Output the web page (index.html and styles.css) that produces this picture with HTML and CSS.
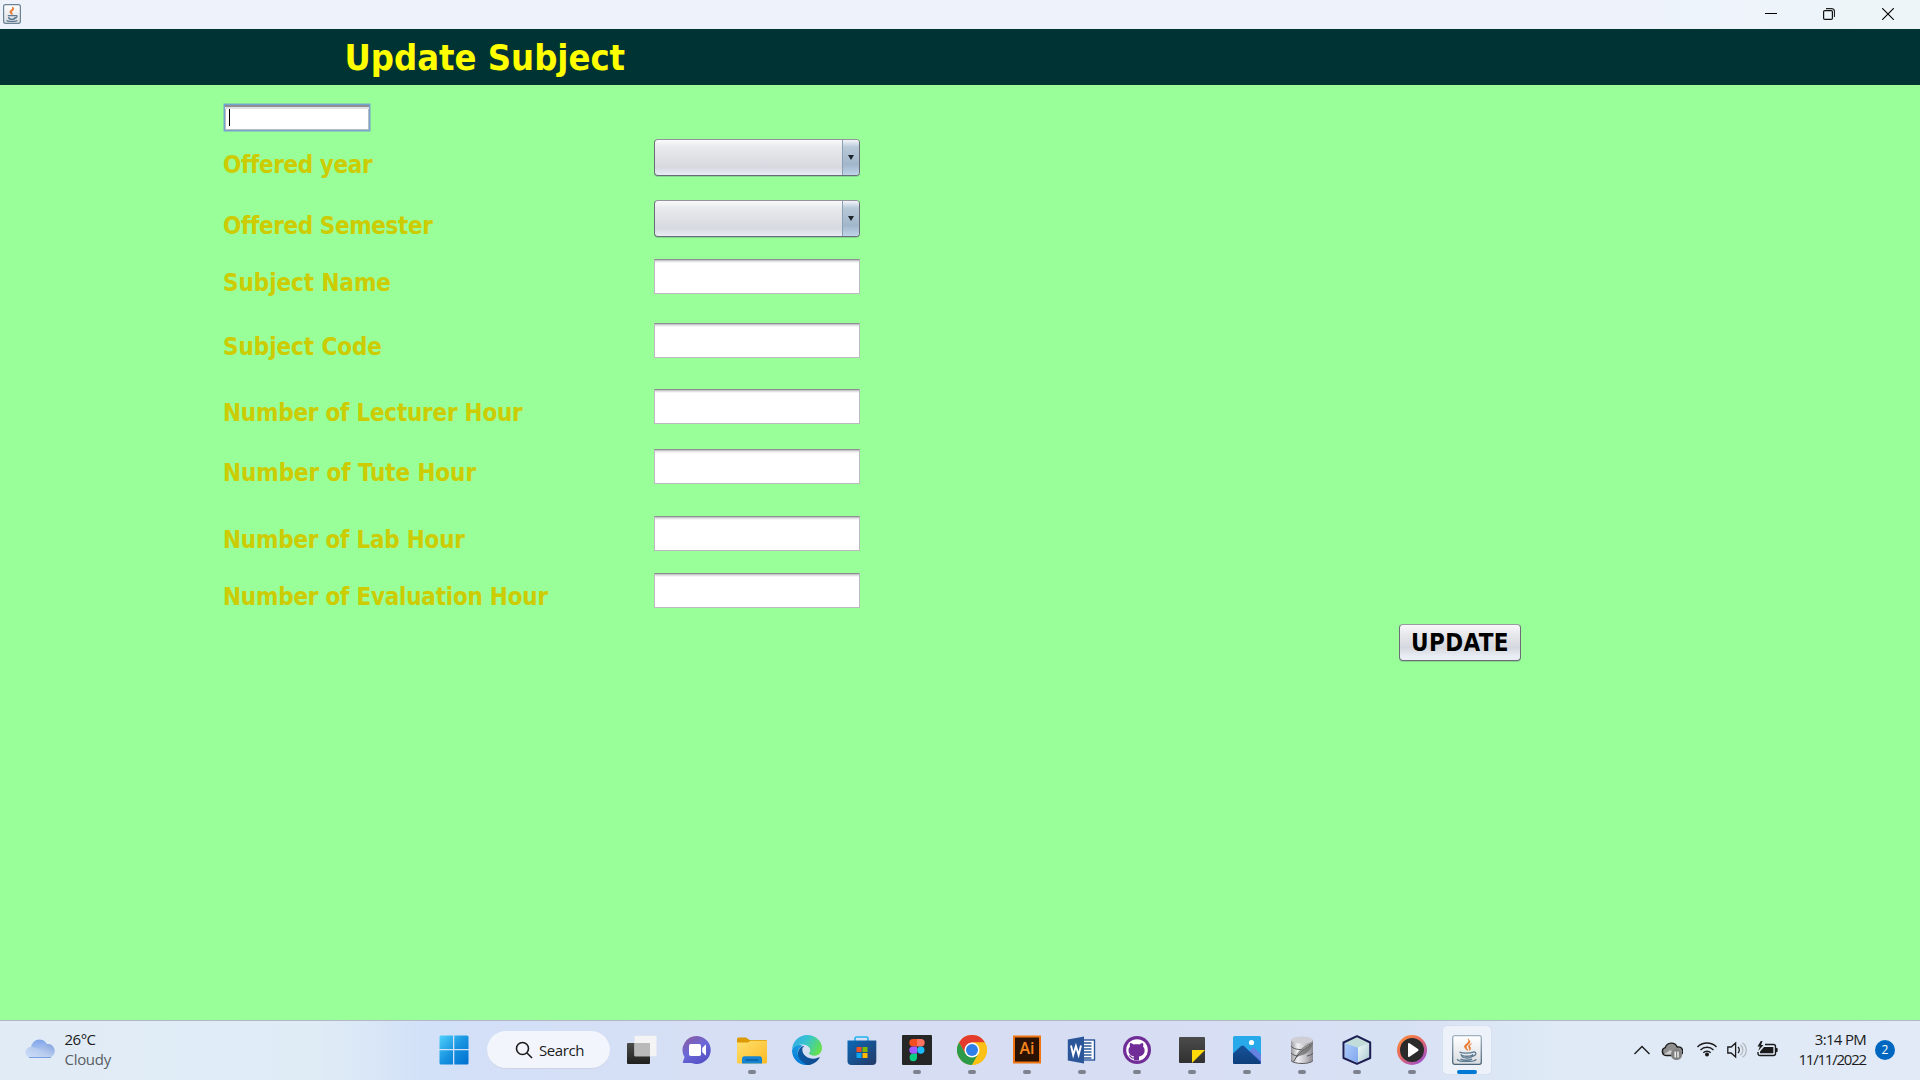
FILE: index.html
```html
<!DOCTYPE html>
<html lang="en">
<head>
<meta charset="utf-8">
<title>Update Subject</title>
<link rel="stylesheet" href="styles.css">
</head>
<body>
<svg class="defs" width="0" height="0">
  <defs>
    <linearGradient id="cup-bg" x1="0" y1="0" x2="0" y2="1"><stop offset="0" stop-color="#fff"/><stop offset="1" stop-color="#d9dce0"/></linearGradient>
    <linearGradient id="cup-rim" x1="0" y1="0" x2="0" y2="1"><stop offset="0" stop-color="#9fb0bf"/><stop offset="1" stop-color="#4b6478"/></linearGradient>
    <symbol id="java" viewBox="0 0 30 30">
      <rect x=".7" y=".7" width="28.6" height="28.6" rx="2" fill="url(#cup-bg)" stroke="url(#cup-rim)" stroke-width="1.3"/>
      <path d="M15.4 15.5c-3.6-3.2-4.200-4.400-.5-7 2.200-1.600 2-3.200 1.100-4.800 3 2.500 2.200 4.300-.1 6-2.300 1.900-1.900 3 .1 5.200zM17.200 15.600c1.300-1.700-.9-2.700-.7-4.300.2-1.400 1.600-2.200 3.200-2.600-2 1.200-2.500 2.200-1.600 3.300 1.100 1.400.7 2.600-.9 3.600z" fill="#e8762b" stroke="#e8762b" stroke-width=".5"/>
      <path d="M7.500 17.200c2.500 1.300 11 1.300 13.500 0M9 19c.6 3.500 2 4 6 4s5-.6 5.600-4M9.500 20.300c3 1 8 1 10.500 0M20.500 17.500c4-2 5.200 2.600-.7 4M5.500 24c-1.600 3.200 17.500 3.300 18.800.2M8.500 24.200c3 1.200 9 1.200 11.500 0" fill="none" stroke="#5c7a92" stroke-width="1.300"/>
    </symbol>
  </defs>
</svg>

<header class="titlebar">
  <svg class="app-icon" width="17" height="20" viewBox="0 0 30 30" preserveAspectRatio="none">
    <rect x="1" y="1" width="28" height="28" rx="3" fill="url(#cup-bg)" stroke="#6c8396" stroke-width="2"/>
    <path d="M14.500 15.500c-4-3-3.500-5 0-7 1.700-1.100 1.800-2.500 1.300-4 2.800 2.200 2.200 4-.2 5.700-2 1.500-1.500 3 .2 5z" fill="#e8762b" stroke="#e8762b" stroke-width="1.500"/>
    <path d="M8 17.500h13M9 19.500c.6 3 2 3.500 6 3.500s5-.6 5.600-3.500M20.500 17.500c4-1 4 2.600-.7 4M6 24.500c1 2 16 2.200 18 0" fill="none" stroke="#5c7a92" stroke-width="2"/>
  </svg>
  <div class="window-buttons">
    <svg width="12" height="12" viewBox="0 0 12 12"><path d="M0 5.500h12" stroke="#000"/></svg>
    <svg width="12" height="12" viewBox="0 0 12 12" fill="none"><path d="M3 .6h5.500a3 3 0 0 1 3 3V9" stroke="#222" stroke-width="1.200"/><rect x=".6" y="2.600" width="8.800" height="8.800" rx="1.200" stroke="#111" stroke-width="1.200"/></svg>
    <svg width="12" height="12" viewBox="0 0 12 12"><path d="M.2.2l11.600 11.600M11.800.2L.2 11.800" stroke="#000" stroke-width="1.100"/></svg>
  </div>
</header>

<div class="banner"><h1 class="heading">Update Subject</h1></div>

<main class="panel">
  <div class="id-field"><span class="caret"></span></div>
  <div class="form">
    <div class="row row-combo"><span class="label tight">Offered year</span><div class="combo"><i class="arrow"></i></div></div>
    <div class="row row-combo"><span class="label tight">Offered Semester</span><div class="combo"><i class="arrow"></i></div></div>
    <div class="row"><span class="label subject">Subject Name</span><div class="field"></div></div>
    <div class="row"><span class="label subject">Subject Code</span><div class="field"></div></div>
    <div class="row"><span class="label hours">Number of Lecturer Hour</span><div class="field"></div></div>
    <div class="row"><span class="label">Number of Tute Hour</span><div class="field"></div></div>
    <div class="row"><span class="label hours">Number of Lab Hour</span><div class="field"></div></div>
    <div class="row"><span class="label hours">Number of Evaluation Hour</span><div class="field"></div></div>
  </div>
  <button class="update" type="button"><span>UPDATE</span></button>
</main>

<footer class="taskbar">
  <div class="weather">
    <svg width="30" height="20" viewBox="0 0 30 20">
      <defs>
        <linearGradient id="cl1" x1="0" y1="0" x2="0" y2="1"><stop offset="0" stop-color="#7fa4e8"/><stop offset="1" stop-color="#c3d8fa"/></linearGradient>
        <linearGradient id="cl2" x1="1" y1="0" x2="0" y2="1"><stop offset="0" stop-color="#7f9fdf"/><stop offset=".5" stop-color="#b7cbee"/><stop offset="1" stop-color="#cfe0fa"/></linearGradient>
      </defs>
      <circle cx="14.500" cy="9" r="8.500" fill="url(#cl1)"/>
      <path d="M6 19a5.600 5.600 0 1 1 3-10.400c2 .2 5 2 7 1.500A7 7 0 1 1 23 19z" fill="url(#cl2)"/>
      <path d="M4 18.500h22" stroke="#7c9fe2"/>
    </svg>
    <div class="weather-text"><span class="temp">26°C</span><span class="sky">Cloudy</span></div>
  </div>

  <div class="apps">
    <div class="start">
      <svg width="30" height="30" viewBox="0 0 30 30">
        <defs><linearGradient id="win" x1="0" y1="0" x2="1" y2="1"><stop offset="0" stop-color="#4fd0fb"/><stop offset=".5" stop-color="#1793e0"/><stop offset="1" stop-color="#006fcf"/></linearGradient></defs>
        <path d="M2 .5h12V14H.5V2A1.500 1.500 0 0 1 2 .5zM15.300.5H28A1.500 1.500 0 0 1 29.500 2v12H15.300zM.5 15.300H14v14.200H2A1.500 1.500 0 0 1 .5 28zM15.300 15.300h14.200V28a1.500 1.500 0 0 1-1.500 1.500H15.300z" fill="url(#win)"/>
      </svg>
    </div>
    <div class="search">
      <svg width="18" height="18" viewBox="0 0 18 18" fill="none" stroke="#1b1b1b" stroke-width="1.600"><circle cx="7.500" cy="7.500" r="6"/><path d="M12 12l5 5"/></svg>
      <span class="search-text">Search</span>
    </div>
    <div class="slot">
      <svg width="30" height="30" viewBox="0 0 30 30">
        <defs><linearGradient id="tv" x1="0" y1="0" x2="0" y2="1"><stop offset="0" stop-color="#4b4b49"/><stop offset="1" stop-color="#20201f"/></linearGradient></defs>
        <rect x="0" y="8" width="23" height="21" rx="1" fill="url(#tv)"/><rect x="7.500" y=".8" width="22" height="20.400" rx="1" fill="#f4f4f4"/><path d="M7.500 8H23v13.200H7.500z" fill="#b9bab9"/>
      </svg>
    </div>
    <div class="slot">
      <svg width="30" height="30" viewBox="0 0 30 30">
        <defs><linearGradient id="chat" x1=".1" y1="0" x2=".7" y2="1"><stop offset="0" stop-color="#8c5b9f"/><stop offset=".5" stop-color="#6a68d8"/><stop offset="1" stop-color="#5450c4"/></linearGradient></defs>
        <path d="M15 1a14 14 0 1 1-5.500 27H1.600c-.8 0-1.100-.7-.7-1.300l1.700-4.500A14 14 0 0 1 15 1z" fill="url(#chat)"/>
        <rect x="7" y="9" width="12" height="12" rx="1.800" fill="#fff"/><path d="M20.200 13l3.200-3.300q.6-.3.600.5v9.500q0 .9-.7.500L20.200 17z" fill="#fff"/>
      </svg>
    </div>
    <div class="slot open">
      <svg width="30" height="30" viewBox="0 0 30 30">
        <defs><linearGradient id="fold" x1="0" y1="0" x2="1" y2="1"><stop offset="0" stop-color="#ffdf6e"/><stop offset="1" stop-color="#fbbb23"/></linearGradient></defs>
        <path d="M0 4a1.600 1.600 0 0 1 1.600-1.600H9L12.500 5H29a1 1 0 0 1 1 1v3H0z" fill="#dc9a06"/>
        <path d="M0 7.500h11l2.500-1.700H29a1 1 0 0 1 1 1V27.500a1 1 0 0 1-1 1H1a1 1 0 0 1-1-1z" fill="url(#fold)"/>
        <path d="M5 28.500v-4.700A2.500 2.500 0 0 1 7.500 21.300h15A2.500 2.500 0 0 1 25 23.800v4.700z" fill="#1685d1"/><path d="M8.500 25h13" stroke="#0a5698" stroke-width="1.300"/>
      </svg>
    </div>
    <div class="slot">
      <svg width="30" height="30" viewBox="0 0 256 256">
        <defs>
          <linearGradient id="e1" x1="0" y1="0" x2="1" y2="0"><stop offset="0" stop-color="#0c59a4"/><stop offset="1" stop-color="#114a8b"/></linearGradient>
          <linearGradient id="e2" x1=".5" y1="0" x2=".3" y2="1"><stop offset="0" stop-color="#1b9de2"/><stop offset="1" stop-color="#0078d4"/></linearGradient>
          <linearGradient id="e3" x1="0" y1=".2" x2="1" y2=".6"><stop offset="0" stop-color="#35a8e8"/><stop offset=".45" stop-color="#36c5cf"/><stop offset="1" stop-color="#66e04a"/></linearGradient>
        </defs>
        <path d="M231 190c-3 2-7 4-11 5-12 5-25 7-38 7-50 0-94-34-94-79 0-12 7-23 18-29-45 2-57 49-57 77 0 78 72 86 87 86 8 0 21-2 28-5 33-11 58-33 72-58 2-4-2-6-5-4z" fill="url(#e1)"/>
        <path d="M106 241c-32-16-57-48-57-87 0-25 12-51 40-61C62 73 18 85 0 127c0 64 42 129 128 129-8-2-16-8-22-15z" fill="url(#e2)"/>
        <path d="M0 127C2 57 61 0 128 0c72 0 128 52 128 111 0 33-24 65-62 65-30 0-50-10-50-20 0-5 12-8 12-28 0-20-26-47-67-47C43 81 14 101 0 127z" fill="url(#e3)"/>
      </svg>
    </div>
    <div class="slot">
      <svg width="30" height="30" viewBox="0 0 30 30">
        <defs><linearGradient id="store" x1="0" y1="0" x2="1" y2="1"><stop offset="0" stop-color="#0d68b8"/><stop offset="1" stop-color="#233a66"/></linearGradient></defs>
        <path d="M8 6V3.500A1.500 1.500 0 0 1 9.500 2h10a1.500 1.500 0 0 1 1.500 1.500V6" fill="none" stroke="#20b4ed" stroke-width="1.600"/>
        <path d="M.5 5.500H29.300V26a4 4 0 0 1-4 4H4.500a4 4 0 0 1-4-4z" fill="url(#store)"/>
        <path d="M9.500 12h5v5h-5z" fill="#f25022"/><path d="M15.500 12h5v5h-5z" fill="#7fba00"/><path d="M9.500 18h5v5h-5z" fill="#0ea5ef"/><path d="M15.500 18h5v5h-5z" fill="#ffb900"/>
      </svg>
    </div>
    <div class="slot open">
      <svg width="30" height="30" viewBox="0 0 30 30">
        <rect width="30" height="30" rx="1" fill="#262626"/>
        <path d="M15 4h-4a3.700 3.700 0 0 0 0 7.400h4z" fill="#f24e1e"/><path d="M15 4h4a3.700 3.700 0 0 1 0 7.400h-4z" fill="#ff7262"/><path d="M15 11.400h-4a3.700 3.700 0 0 0 0 7.400h4z" fill="#a259ff"/><circle cx="18.800" cy="15.100" r="3.700" fill="#1abcfe"/><path d="M15 18.800h-4a3.700 3.700 0 1 0 4 3.700z" fill="#0acf83"/>
      </svg>
    </div>
    <div class="slot open">
      <svg width="30" height="30" viewBox="0 0 30 30">
        <circle cx="15" cy="15" r="15" fill="#fbc116"/>
        <path d="M2 7.500A15 15 0 0 1 28 7.500H15L8.500 18.700z" fill="#e33b2e"/>
        <path d="M2 7.500A15 15 0 0 0 15 30l6.500-11.200H8.500z" fill="#2c9a48"/>
        <path d="M28 7.500H15v7.500l6.500 3.800L15 30A15 15 0 0 0 28 7.500z" fill="#fbc116"/>
        <circle cx="15" cy="15" r="7.500" fill="#fff"/><circle cx="15" cy="15" r="6" fill="#2f7de9"/>
      </svg>
    </div>
    <div class="slot open">
      <svg width="30" height="30" viewBox="0 0 30 30">
        <rect x="2" y="1.500" width="26" height="26" fill="#2b1203" stroke="#ef7413" stroke-width="2"/>
        <text x="15" y="19" class="ai-text" textLength="15" lengthAdjust="spacingAndGlyphs">Ai</text>
      </svg>
    </div>
    <div class="slot open">
      <svg width="30" height="30" viewBox="0 0 30 30">
        <rect x="15" y="5" width="12.500" height="20" fill="#fff" stroke="#2b579a" stroke-width="1.400"/>
        <path d="M16 8h8.500M16 11h8.500M16 14h8.500M16 17h8.500M16 20h8.500M16 23h8.500" stroke="#2b579a" stroke-width="1.300"/>
        <path d="M.8 4.500L17 1.500v27L.8 25.500z" fill="#2b579a"/>
        <path d="M4 10.500l2.200 9.500L8.900 11l2.700 9L14 10.500" fill="none" stroke="#fff" stroke-width="1.900"/>
      </svg>
    </div>
    <div class="slot open">
      <svg width="30" height="30" viewBox="0 0 30 30">
        <circle cx="15" cy="15" r="14" fill="#702d97"/><circle cx="15" cy="15" r="10.800" fill="#fff"/>
        <path d="M12 25.500v-4c-3.500-.6-5.500-2.500-5.500-6 0-1.800.5-2.800 1.400-3.800-.3-1.300-.2-2.700.2-3.700 1.400 0 2.700.8 3.500 1.500 1.800-.5 4-.5 5.800 0 .9-.7 2.200-1.500 3.500-1.500.5 1 .5 2.400.2 3.700 1 1 1.500 2 1.500 3.800 0 3.500-2.100 5.400-5.600 6v4z" fill="#702d97"/>
        <path d="M12 23c-3 .6-3.300-2-4.700-2.300" stroke="#702d97" stroke-width="1.200" fill="none"/>
      </svg>
    </div>
    <div class="slot open">
      <svg width="30" height="30" viewBox="0 0 30 30">
        <defs><linearGradient id="note" x1="0" y1="0" x2="0" y2="1"><stop offset="0" stop-color="#4b4b4b"/><stop offset="1" stop-color="#303030"/></linearGradient></defs>
        <rect x="2" y="2" width="26" height="26" rx="1" fill="url(#note)"/><path d="M15 15h13L15 28z" fill="#ffd90a"/>
      </svg>
    </div>
    <div class="slot open">
      <svg width="30" height="30" viewBox="0 0 30 30">
        <defs><clipPath id="ph"><rect x="1" y="1" width="28" height="28" rx="1.500"/></clipPath>
        <linearGradient id="hill" x1="0" y1="0" x2="0" y2="1"><stop offset="0" stop-color="#17549b"/><stop offset="1" stop-color="#0d3d79"/></linearGradient></defs>
        <g clip-path="url(#ph)"><path d="M0 0h30v30H0z" fill="#27a9ea"/><path d="M13 20l7.500-7q1-.7 2 0L30 20.500V30H15z" fill="#6581e1"/><path d="M15 20l3.500-3L30 27v3H15z" fill="#4262c9"/><path d="M0 19.500L9 11q1.500-1 3 0L28 26.500 29 30H0z" fill="url(#hill)"/><circle cx="19.500" cy="7.500" r="2.600" fill="#fff"/></g>
      </svg>
    </div>
    <div class="slot open">
      <svg width="30" height="30" viewBox="0 0 30 30">
        <defs><linearGradient id="db" x1="0" y1="0" x2="1" y2="0"><stop offset="0" stop-color="#98969c"/><stop offset=".3" stop-color="#f0f0f4"/><stop offset=".65" stop-color="#c4c3c9"/><stop offset="1" stop-color="#8b898f"/></linearGradient></defs>
        <path d="M4 5v20c0 5 22 5 22 0V5z" fill="url(#db)"/><ellipse cx="15" cy="5" rx="11" ry="3.600" fill="#cfced5"/>
        <path d="M4 11c2 3 8 4 13 3.500M4 18c2 2 4 2.700 7 3M4 25.500c3 4 19 4 22 0M20 21c3-.5 5-1.500 6-3" fill="none" stroke="#5c5c5c" stroke-width="1"/>
        <path d="M8 24c2-7 7-13 18-16.500-1 6-5 10-9 12-3 1.200-6 1-9 4.500" fill="#6f6f6f" opacity=".8"/><path d="M6.500 26.500c4-7 9-12 16-16" stroke="#3a3a3a" fill="none" stroke-width=".8"/><path d="M11 19.500c3-4 7-7 11-9" stroke="#b5b5b5" fill="none" stroke-width=".8"/>
      </svg>
    </div>
    <div class="slot open">
      <svg width="30" height="30" viewBox="0 0 30 30">
        <defs><linearGradient id="nb1" x1="0" y1="0" x2="1" y2="1"><stop offset="0" stop-color="#a9c9fb"/><stop offset="1" stop-color="#82a7ee"/></linearGradient><linearGradient id="nb2" x1="0" y1="0" x2="1" y2="1"><stop offset="0" stop-color="#f1fafa"/><stop offset="1" stop-color="#a9c9d0"/></linearGradient></defs>
        <path d="M3 8l13 4.500V28L3 22.500z" fill="url(#nb1)"/><path d="M16 12.500L27 8v14.500L16 28z" fill="url(#nb2)"/><path d="M15 1.500L28 7.500 16 12.500 2.500 8z" fill="#c2ddd9"/>
        <path d="M15 1.200L28.200 7.500v15.500L15 28.900 1.500 23V7.500z" fill="none" stroke="#1b1c50" stroke-width="2" stroke-linejoin="round"/>
      </svg>
    </div>
    <div class="slot open">
      <svg width="30" height="30" viewBox="0 0 30 30">
        <defs><linearGradient id="mp" x1="0" y1="0" x2=".8" y2="1"><stop offset="0" stop-color="#ff9632"/><stop offset=".5" stop-color="#e56664"/><stop offset="1" stop-color="#9b50d2"/></linearGradient></defs>
        <circle cx="15" cy="15" r="15" fill="url(#mp)"/><circle cx="15" cy="15" r="12" fill="#2b2b2b"/><path d="M11 9q0-1.500 1.500-.8L21 14q1.200 1 0 2l-8.500 5.700Q11 22.500 11 21z" fill="#fff"/>
      </svg>
    </div>
    <div class="slot open active"><svg width="30" height="30" viewBox="0 0 30 30"><use href="#java"/></svg></div>
  </div>

  <div class="tray">
    <svg class="chevron" width="16" height="10" viewBox="0 0 16 10"><path d="M.5 9L8 1.500 15.500 9" fill="none" stroke="#1b1b1b" stroke-width="1.400"/></svg>
    <svg class="cloud" width="22" height="20" viewBox="0 0 22 20"><path d="M5 14.500a4 4 0 0 1-.8-7.800 6.400 6.400 0 0 1 12-.7 4.300 4.300 0 0 1 2.300 8.500z" fill="#8f8f8f" stroke="#1b1b1b" stroke-width="1.400"/><path d="M3 13.500l6-4.500 7 4.500z" fill="#ccc"/><circle cx="15.500" cy="13.500" r="5.600" fill="#808080"/><path d="M14.200 10.500v6M17 10.500v6" stroke="#fff" stroke-width="1.300"/></svg>
    <svg class="wifi" width="20" height="16" viewBox="0 0 20 16" fill="none" stroke="#1b1b1b" stroke-width="1.400"><path d="M.5 6a13.400 13.400 0 0 1 19 0M3.500 9a9.200 9.200 0 0 1 13 0M6.300 11.800a5.200 5.200 0 0 1 7.400 0"/><circle cx="10" cy="13.500" r="1.300" fill="#1b1b1b"/></svg>
    <svg class="volume" width="20" height="18" viewBox="0 0 20 18" fill="none" stroke="#1b1b1b" stroke-width="1.300"><path d="M.8 6h3.400L8.600 2v14l-4.400-4H.8zM11 6c1.700 1.500 1.700 4.500 0 6"/><path d="M13.300 3.800c3.400 2.500 3.400 8 0 10.400M15.500 1.700c5 4 5 11 0 14.600" stroke="#b1b8bf"/></svg>
    <svg class="battery" width="21" height="16" viewBox="0 0 21 16"><path d="M8 3.500h8.500a2 2 0 0 1 2 2v7a2 2 0 0 1-2 2H3a2 2 0 0 1-2-2V11" fill="none" stroke="#1b1b1b" stroke-width="1.400"/><path d="M3 10.500l4-4.500h9.300v6.300H3z" fill="#1b1b1b"/><path d="M19 7h1.300q.8 2 0 4H19z" fill="#1b1b1b"/><path d="M3.800 0L.5 5.500h2.300L1.200 10l5.300-6H4.100L5.500 0z" fill="#1b1b1b"/></svg>
    <div class="clock"><span class="time">3:14 PM</span><span class="date">11/11/2022</span></div>
    <span class="badge">2</span>
  </div>
</footer>
</body>
</html>
```

FILE: styles.css
```css
* { box-sizing: border-box; }
body {
  margin: 0;
  width: 1920px;
  height: 1080px;
  overflow: hidden;
  display: flex;
  flex-direction: column;
  background: #99ff99;
  font-family: "Open Sans", "Noto Sans", sans-serif;
}
svg { display: block; flex: none; }
.defs { position: absolute; }

.titlebar {
  height: 29px;
  flex: none;
  display: flex;
  justify-content: space-between;
  padding: 4px 26px 0 3px;
  background: linear-gradient(90deg, #eef3fb 0%, #eef3fb 85%, #edf5f8 100%);
}
.app-icon { width: 18px; }
.window-buttons { display: flex; gap: 47px; padding-top: 4px; }
.window-buttons svg:first-child { margin-right: -1px; }

.banner {
  height: 56px;
  flex: none;
  background: #003333;
  padding-left: 344.5px;
}
.heading, .label, .update {
  font-family: "DejaVu Sans Condensed", "DejaVu Sans", sans-serif;
  font-stretch: condensed;
  font-weight: bold;
  white-space: nowrap;
}
.heading {
  margin: 0;
  font-size: 36px;
  line-height: 58px;
  color: #ffff00;
}

.panel { flex: 1; display: flex; flex-direction: column; padding: 18px 0 0 223px; }
.id-field {
  width: 148px;
  height: 29px;
  border: 1px solid #8ad2ae;
  box-shadow: inset 0 0 0 1px #73a4d1, inset 0 2px 0 1px #8e8f96, inset 0 4px 0 1px #e2e2e4, inset 0 0 0 2px #bbbbc2;
  border-radius: 1px;
  background: #fff;
  padding: 5px;
}
.caret { display: block; width: 1px; height: 17px; background: #000; }

.form {
  margin-top: 7px;
  display: grid;
  grid-template-rows: 61px 59px 64px 66px 60px 67px 57px 35px;
}
.row { display: flex; align-items: flex-start; }
.label {
  width: 431px;
  padding-top: 10px;
  font-size: 24px;
  line-height: 28px;
  letter-spacing: -0.1px;
  color: #cccc00;
}
.row-combo .label { padding-top: 12px; }
.tight { letter-spacing: -0.4px; }
.subject { letter-spacing: -0.08px; }
.hours { letter-spacing: -0.25px; }
.field {
  width: 206px;
  height: 35px;
  background: linear-gradient(#c6c5c9 0 1px, #e3e3e5 1px 2px, #f5f5f6 2px 3px, #fff 3px);
  border: 1px solid #bcb9c0;
  border-top-color: #8d8e91;
}
.combo {
  width: 206px;
  height: 37px;
  display: flex;
  justify-content: flex-end;
  border: 1px solid #696d78;
  border-top-color: #94939d;
  border-radius: 4px;
  background: linear-gradient(#fafafc, #e9eaed 20%, #d6d9df 78%, #e9edf4);
  box-shadow: 0 1px 0 #86d890;
  overflow: hidden;
}
.arrow {
  width: 17px;
  height: 35px;
  border-left: 1px solid #8ba0b5;
  background: linear-gradient(#f2f6fa, #b8c9d8 20%, #a2b6cb 70%, #bfd3e9);
  display: flex;
  align-items: center;
  justify-content: center;
}
.arrow::before {
  content: "";
  border: 3.5px solid transparent;
  border-top: 5px solid #1e2329;
  border-bottom: 0;
}
.update {
  margin: 16px 0 0 1176px;
  width: 122px;
  height: 37px;
  flex: none;
  padding: 2px 0 0;
  font-size: 24px;
  line-height: 33px;
  letter-spacing: 0.4px;
  color: #000;
  border: 1px solid #6c6c77;
  border-top-color: #9a99a4;
  border-radius: 4px;
  background: linear-gradient(#f8f8fa, #e6e7eb 30%, #d5d8df 65%, #e9edf4 90%);
  box-shadow: 0 1px 0 #86d890;
}

.taskbar {
  height: 60px;
  flex: none;
  display: flex;
  align-items: stretch;
  border-top: 1px solid #b3b8c6;
  background: linear-gradient(90deg, #e1ebf6 0, #dfecf6 320px, #d2e0f8 430px, #d6dff4 700px, #d7ddf3 1100px, #d7e1f4 1400px, #dfeaf6 1560px, #e1eaf6 1920px);
}
.weather { width: 426.5px; padding: 18px 0 0 25px; display: flex; gap: 9.5px; }
.weather-text { display: flex; flex-direction: column; margin-top: -10px; }
.temp, .sky, .time, .date { font-size: 15px; line-height: 20px; color: #1b1b1b; }
.temp { letter-spacing: -0.5px; }
.sky { color: #5a5e63; letter-spacing: -0.3px; }

.apps { display: flex; }
.start { width: 60.5px; padding: 14px 0 0 12.5px; }
.search {
  width: 123px;
  height: 38px;
  margin: 10px 4px 0 0;
  border-radius: 19px;
  background: #f2f5fc;
  border-bottom: 1px solid #cdd3e4;
  display: flex;
  align-items: center;
  padding-left: 28px;
  gap: 6px;
}
.search-text { font-size: 15px; letter-spacing: -0.4px; color: #1b1b1b; }
.slot {
  width: 55px;
  display: flex;
  flex-direction: column;
  align-items: center;
  padding-top: 14px;
}
.open::after {
  content: "";
  width: 8px;
  height: 4px;
  margin-top: 5px;
  border-radius: 2px;
  background: #7e828e;
}
.active {
  width: 48px;
  height: 48px;
  margin: 5px 3px 0 4px;
  padding-top: 9px;
  border-radius: 4px;
  background: #edf1fa;
  box-shadow: 0 0 1px #b9c0ce;
}
.active::after { width: 20px; background: #0078d4; }
.ai-text { font: 600 16px "Open Sans", sans-serif; fill: #f7861c; text-anchor: middle; }

.tray { flex: 1; display: flex; align-items: flex-start; padding-left: 140px; }
.chevron { margin-top: 24px; }
.cloud { margin: 20px 0 0 11px; }
.wifi { margin: 20px 0 0 14px; }
.volume { margin: 20px 0 0 10px; }
.battery { margin: 20px 0 0 10px; }
.clock {
  width: 88px;
  display: flex;
  flex-direction: column;
  align-items: flex-end;
  padding-top: 8px;
}
.time { letter-spacing: -0.7px; }
.date { letter-spacing: -1.2px; }
.badge {
  width: 20px;
  height: 20px;
  margin: 19px 0 0 9px;
  border-radius: 50%;
  background: #0067c0;
  color: #fff;
  font-size: 12px;
  line-height: 20px;
  text-align: center;
}
```
